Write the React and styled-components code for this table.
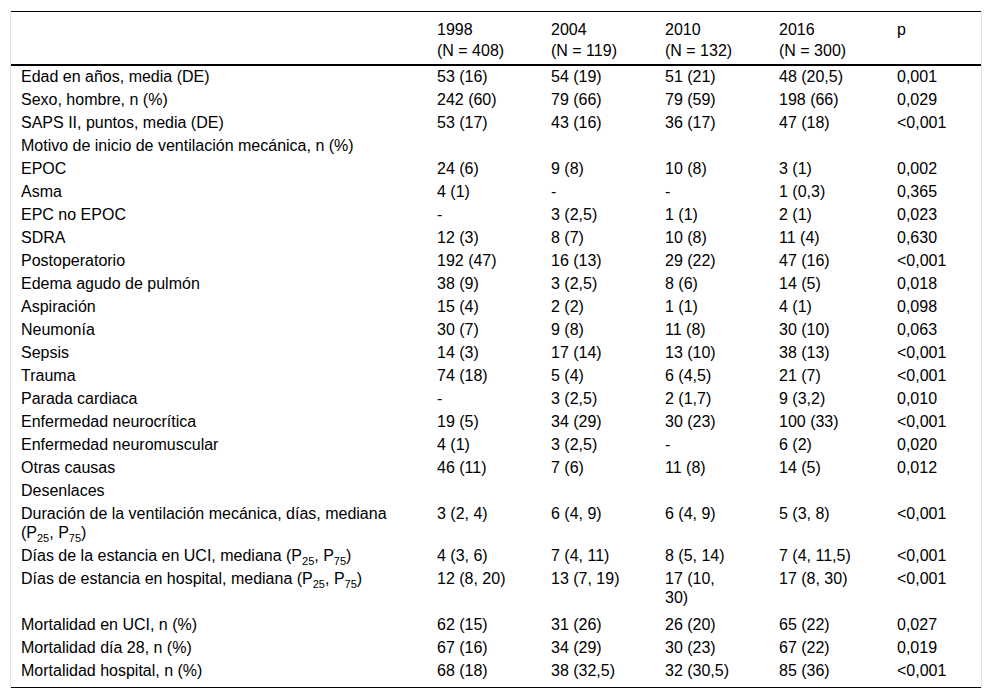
import React from "react";
import styled, { createGlobalStyle } from "styled-components";

const Global = createGlobalStyle`
  html, body { margin: 0; padding: 0; background: #fff; }
  body { font-family: "Liberation Sans", Arial, sans-serif; color: #000; }
`;

const Page = styled.div`
  padding: 11px 10px 0 10px;
`;

const Frame = styled.div`
  width: 970px;
  border-left: 1px solid #e3e3e3;
  border-right: 1px solid #e3e3e3;
`;

const Table = styled.table`
  width: 970px;
  border-collapse: collapse;
  table-layout: fixed;
  font-size: 16px;
  line-height: 19px;
  border-top: 1px solid #000;
  border-bottom: 1px solid #000;
`;

const Col = styled.col`
  width: ${(p) => (p.$w ? `${p.$w}px` : "auto")};
`;

const Head = styled.thead`
  border-bottom: 2px solid #000;
`;

const Th = styled.th`
  text-align: left;
  font-weight: normal;
  vertical-align: top;
  line-height: 21px;
  padding: 7px 10px 3px 10px;
`;

const Td = styled.td`
  text-align: left;
  vertical-align: top;
  padding: 1px 10px ${(p) => p.$padBottom}px 10px;
`;

const Sub = styled.sub`
  font-size: 11px;
  line-height: 0;
`;

const P = () => (
  <>
    (P<Sub>25</Sub>, P<Sub>75</Sub>)
  </>
);

const rows = [
  ["Edad en años, media (DE)", "53 (16)", "54 (19)", "51 (21)", "48 (20,5)", "0,001"],
  ["Sexo, hombre, n (%)", "242 (60)", "79 (66)", "79 (59)", "198 (66)", "0,029"],
  ["SAPS II, puntos, media (DE)", "53 (17)", "43 (16)", "36 (17)", "47 (18)", "<0,001"],
  ["Motivo de inicio de ventilación mecánica, n (%)", "", "", "", "", ""],
  ["EPOC", "24 (6)", "9 (8)", "10 (8)", "3 (1)", "0,002"],
  ["Asma", "4 (1)", "-", "-", "1 (0,3)", "0,365"],
  ["EPC no EPOC", "-", "3 (2,5)", "1 (1)", "2 (1)", "0,023"],
  ["SDRA", "12 (3)", "8 (7)", "10 (8)", "11 (4)", "0,630"],
  ["Postoperatorio", "192 (47)", "16 (13)", "29 (22)", "47 (16)", "<0,001"],
  ["Edema agudo de pulmón", "38 (9)", "3 (2,5)", "8 (6)", "14 (5)", "0,018"],
  ["Aspiración", "15 (4)", "2 (2)", "1 (1)", "4 (1)", "0,098"],
  ["Neumonía", "30 (7)", "9 (8)", "11 (8)", "30 (10)", "0,063"],
  ["Sepsis", "14 (3)", "17 (14)", "13 (10)", "38 (13)", "<0,001"],
  ["Trauma", "74 (18)", "5 (4)", "6 (4,5)", "21 (7)", "<0,001"],
  ["Parada cardiaca", "-", "3 (2,5)", "2 (1,7)", "9 (3,2)", "0,010"],
  ["Enfermedad neurocrítica", "19 (5)", "34 (29)", "30 (23)", "100 (33)", "<0,001"],
  ["Enfermedad neuromuscular", "4 (1)", "3 (2,5)", "-", "6 (2)", "0,020"],
  ["Otras causas", "46 (11)", "7 (6)", "11 (8)", "14 (5)", "0,012"],
  ["Desenlaces", "", "", "", "", ""],
  [
    <>Duración de la ventilación mecánica, días, mediana <P /></>,
    "3 (2, 4)", "6 (4, 9)", "6 (4, 9)", "5 (3, 8)", "<0,001",
  ],
  [
    <>Días de la estancia en UCI, mediana <P /></>,
    "4 (3, 6)", "7 (4, 11)", "8 (5, 14)", "7 (4, 11,5)", "<0,001",
  ],
  [
    <>Días de estancia en hospital, mediana <P /></>,
    "12 (8, 20)", "13 (7, 19)", <>17 (10,<br />30)</>, "17 (8, 30)", "<0,001",
  ],
  ["Mortalidad en UCI, n (%)", "62 (15)", "31 (26)", "26 (20)", "65 (22)", "0,027"],
  ["Mortalidad día 28, n (%)", "67 (16)", "34 (29)", "30 (23)", "67 (22)", "0,019"],
  ["Mortalidad hospital, n (%)", "68 (18)", "38 (32,5)", "32 (30,5)", "85 (36)", "<0,001"],
];

const padFor = (i) => {
  if (i === rows.length - 1) return 7;
  if (i === 21) return 7;
  return 3;
};

const headers = [
  ["1998", "(N = 408)"],
  ["2004", "(N = 119)"],
  ["2010", "(N = 132)"],
  ["2016", "(N = 300)"],
  ["p", ""],
];

export default function App() {
  return (
    <Page>
      <Global />
      <Frame>
        <Table>
          <colgroup>
            <Col $w={416} />
            <Col $w={114} />
            <Col $w={114} />
            <Col $w={114} />
            <Col $w={118} />
            <Col />
          </colgroup>
          <Head>
            <tr>
              <Th />
              {headers.map(([y, n], i) => (
                <Th key={i}>
                  {y}
                  {n && <br />}
                  {n}
                </Th>
              ))}
            </tr>
          </Head>
          <tbody>
            {rows.map((r, i) => (
              <tr key={i}>
                {r.map((c, j) => (
                  <Td key={j} $padBottom={padFor(i)}>
                    {c}
                  </Td>
                ))}
              </tr>
            ))}
          </tbody>
        </Table>
      </Frame>
    </Page>
  );
}
